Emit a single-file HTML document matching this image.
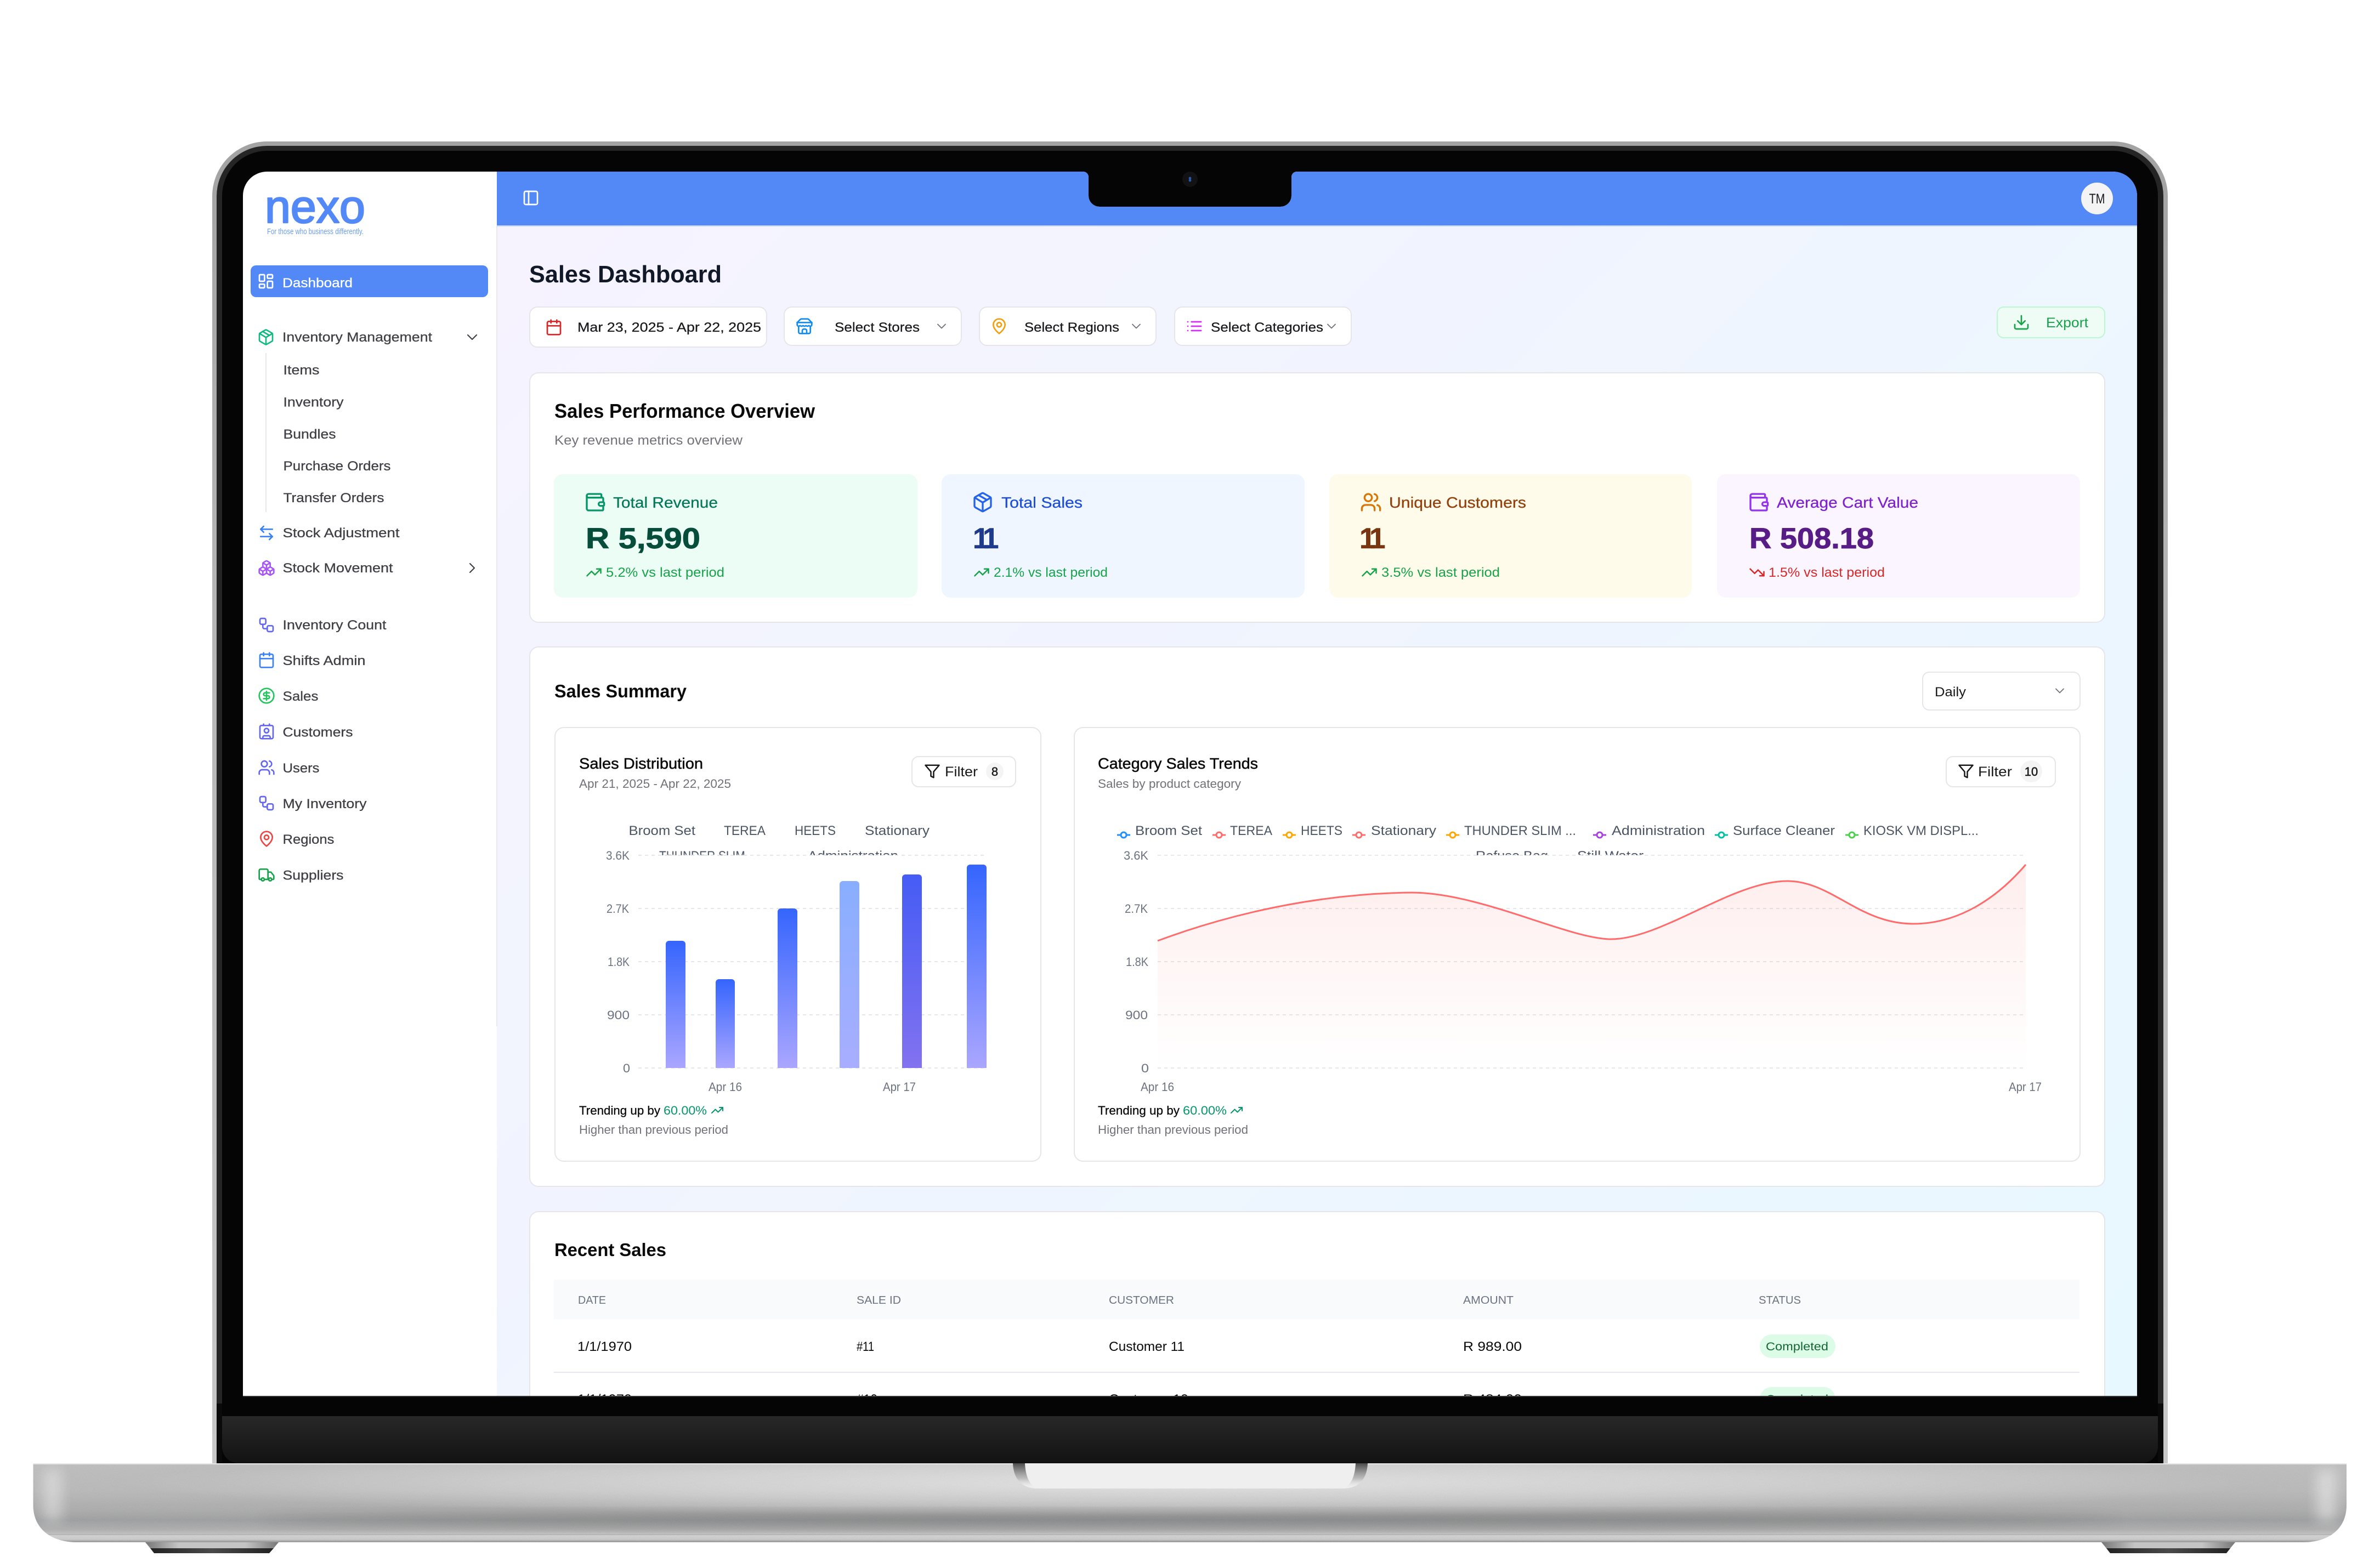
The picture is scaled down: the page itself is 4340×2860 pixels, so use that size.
<!DOCTYPE html>
<html lang="en">
<head>
<meta charset="utf-8">
<title>Sales Dashboard</title>
<style>
html,body{margin:0;padding:0;background:#fff;width:4340px;height:2860px;overflow:hidden}
svg{display:block}
text{font-family:"Liberation Sans",sans-serif}
.ic{fill:none;stroke-width:2;stroke-linecap:round;stroke-linejoin:round}
.thin{stroke-width:1.6}
</style>
</head>
<body>
<svg xmlns="http://www.w3.org/2000/svg" width="4340" height="2860" viewBox="0 0 4340 2860">
<defs>
<symbol id="dash" viewBox="0 0 24 24"><rect x="3" y="3" width="7" height="9" rx="1"/><rect x="14" y="3" width="7" height="5" rx="1"/><rect x="14" y="12" width="7" height="9" rx="1"/><rect x="3" y="16" width="7" height="5" rx="1"/></symbol>
<symbol id="pkg" viewBox="0 0 24 24"><path d="M11 21.73a2 2 0 0 0 2 0l7-4A2 2 0 0 0 21 16V8a2 2 0 0 0-1-1.73l-7-4a2 2 0 0 0-2 0l-7 4A2 2 0 0 0 3 8v8a2 2 0 0 0 1 1.73z"/><path d="M12 22V12"/><path d="m3.3 7 7.703 4.734a2 2 0 0 0 1.994 0L20.7 7"/><path d="m7.5 4.27 9 5.15"/></symbol>
<symbol id="arrows" viewBox="0 0 24 24"><path d="M8 3 4 7l4 4"/><path d="M4 7h16"/><path d="m16 21 4-4-4-4"/><path d="M20 17H4"/></symbol>
<symbol id="boxes" viewBox="0 0 24 24"><path d="M2.97 12.92A2 2 0 0 0 2 14.63v3.24a2 2 0 0 0 .97 1.71l3 1.8a2 2 0 0 0 2.06 0L12 19v-5.5l-5-3-4.03 2.42Z"/><path d="m7 16.5-4.74-2.85"/><path d="m7 16.5 5-3"/><path d="M7 16.5v5.17"/><path d="M12 13.5V19l3.97 2.38a2 2 0 0 0 2.06 0l3-1.8a2 2 0 0 0 .97-1.71v-3.24a2 2 0 0 0-.97-1.71L17 10.5l-5 3Z"/><path d="m17 16.5-5-3"/><path d="m17 16.5 4.74-2.85"/><path d="M17 16.5v5.17"/><path d="M7.97 4.42A2 2 0 0 0 7 6.13v4.37l5 3 5-3V6.13a2 2 0 0 0-.97-1.71l-3-1.8a2 2 0 0 0-2.06 0l-3 1.8Z"/><path d="M12 8 7.26 5.15"/><path d="m12 8 4.74-2.85"/><path d="M12 13.5V8"/></symbol>
<symbol id="flow" viewBox="0 0 24 24"><rect x="3" y="3" width="8" height="8" rx="2"/><path d="M7 11v4a2 2 0 0 0 2 2h4"/><rect x="13" y="13" width="8" height="8" rx="2"/></symbol>
<symbol id="cal" viewBox="0 0 24 24"><path d="M8 2v4"/><path d="M16 2v4"/><rect x="3" y="4" width="18" height="18" rx="2"/><path d="M3 10h18"/></symbol>
<symbol id="dollar" viewBox="0 0 24 24"><circle cx="12" cy="12" r="10"/><path d="M16 8h-6a2 2 0 1 0 0 4h4a2 2 0 1 1 0 4H8"/><path d="M12 18V6"/></symbol>
<symbol id="contact" viewBox="0 0 24 24"><path d="M16 2v2"/><path d="M7 22v-2a2 2 0 0 1 2-2h6a2 2 0 0 1 2 2v2"/><path d="M8 2v2"/><circle cx="12" cy="11" r="3"/><rect x="3" y="4" width="18" height="18" rx="2"/></symbol>
<symbol id="users" viewBox="0 0 24 24"><path d="M16 21v-2a4 4 0 0 0-4-4H6a4 4 0 0 0-4 4v2"/><circle cx="9" cy="7" r="4"/><path d="M22 21v-2a4 4 0 0 0-3-3.87"/><path d="M16 3.13a4 4 0 0 1 0 7.75"/></symbol>
<symbol id="pin" viewBox="0 0 24 24"><path d="M20 10c0 6-8 12-8 12s-8-6-8-12a8 8 0 0 1 16 0Z"/><circle cx="12" cy="10" r="3"/></symbol>
<symbol id="truck" viewBox="0 0 24 24"><path d="M14 18V6a2 2 0 0 0-2-2H4a2 2 0 0 0-2 2v11a1 1 0 0 0 1 1h2"/><path d="M15 18H9"/><path d="M19 18h2a1 1 0 0 0 1-1v-3.65a1 1 0 0 0-.22-.624l-3.48-4.35A1 1 0 0 0 17.52 8H14"/><circle cx="17" cy="18" r="2"/><circle cx="7" cy="18" r="2"/></symbol>
<symbol id="down" viewBox="0 0 24 24"><path d="m6 9 6 6 6-6"/></symbol>
<symbol id="right" viewBox="0 0 24 24"><path d="m9 18 6-6-6-6"/></symbol>
<symbol id="panel" viewBox="0 0 24 24"><rect x="3" y="3" width="18" height="18" rx="2"/><path d="M9 3v18"/></symbol>
<symbol id="store" viewBox="0 0 24 24"><path d="m2 7 4.41-4.41A2 2 0 0 1 7.83 2h8.34a2 2 0 0 1 1.42.59L22 7"/><path d="M4 12v8a2 2 0 0 0 2 2h12a2 2 0 0 0 2-2v-8"/><path d="M15 22v-4a2 2 0 0 0-2-2h-2a2 2 0 0 0-2 2v4"/><path d="M2 7h20"/><path d="M22 7v3a2 2 0 0 1-2 2a2.7 2.7 0 0 1-1.59-.63.7.7 0 0 0-.82 0A2.7 2.7 0 0 1 16 12a2.7 2.7 0 0 1-1.59-.63.7.7 0 0 0-.82 0A2.7 2.7 0 0 1 12 12a2.7 2.7 0 0 1-1.59-.63.7.7 0 0 0-.82 0A2.7 2.7 0 0 1 8 12a2.7 2.7 0 0 1-1.59-.63.7.7 0 0 0-.82 0A2.7 2.7 0 0 1 4 12a2 2 0 0 1-2-2V7"/></symbol>
<symbol id="list" viewBox="0 0 24 24"><path d="M3 12h.01"/><path d="M3 18h.01"/><path d="M3 6h.01"/><path d="M8 12h13"/><path d="M8 18h13"/><path d="M8 6h13"/></symbol>
<symbol id="wallet" viewBox="0 0 24 24"><path d="M19 7V4a1 1 0 0 0-1-1H5a2 2 0 0 0 0 4h15a1 1 0 0 1 1 1v4h-3a2 2 0 0 0 0 4h3a1 1 0 0 0 1-1v-2a1 1 0 0 0-1-1"/><path d="M3 5v14a2 2 0 0 0 2 2h15a1 1 0 0 0 1-1v-4"/></symbol>
<symbol id="tup" viewBox="0 0 24 24"><path d="M16 7h6v6"/><path d="m22 7-8.5 8.5-5-5L2 17"/></symbol>
<symbol id="tdown" viewBox="0 0 24 24"><path d="M16 17h6v-6"/><path d="m22 17-8.5-8.5-5 5L2 7"/></symbol>
<symbol id="funnel" viewBox="0 0 24 24"><path d="M22 3H2l8 9.46V19l4 2v-8.54L22 3z"/></symbol>
<symbol id="dl" viewBox="0 0 24 24"><path d="M21 15v4a2 2 0 0 1-2 2H5a2 2 0 0 1-2-2v-4"/><path d="M7 10l5 5 5-5"/><path d="M12 15V3"/></symbol>

<clipPath id="screen"><path d="M443,2546V357a44,44 0 0 1 44,-44H1975a10,10 0 0 1 10,10V357a20,20 0 0 0 20,20H2335a20,20 0 0 0 20,-20V323a10,10 0 0 1 10,-10H3853a44,44 0 0 1 44,44V2546Z"/></clipPath>
<clipPath id="legendClip"><rect x="1000" y="1500" width="2800" height="60"/></clipPath>
<clipPath id="baseClip"><path d="M60.5,2669H4279V2745C4279,2790 4245,2813 4200,2813H140C95,2813 60.5,2790 60.5,2745Z"/></clipPath>

<linearGradient id="contentBg" gradientUnits="userSpaceOnUse" x1="1120" y1="198" x2="3682" y2="2760"><stop offset="0" stop-color="#f6f3ff"/><stop offset=".5" stop-color="#eff5fe"/><stop offset="1" stop-color="#e8f8ff"/></linearGradient>
<linearGradient id="barA" x1="0" y1="0" x2="0" y2="1"><stop offset="0" stop-color="#3565fd"/><stop offset="1" stop-color="#aaa6ff"/></linearGradient>
<linearGradient id="barB" x1="0" y1="0" x2="0" y2="1"><stop offset="0" stop-color="#89aeff"/><stop offset="1" stop-color="#a8aeff"/></linearGradient>
<linearGradient id="barC" x1="0" y1="0" x2="0" y2="1"><stop offset="0" stop-color="#455cf5"/><stop offset="1" stop-color="#8272f0"/></linearGradient>
<linearGradient id="area" gradientUnits="userSpaceOnUse" x1="0" y1="1577" x2="0" y2="1950"><stop offset="0" stop-color="#ff6b6b" stop-opacity=".12"/><stop offset="1" stop-color="#ff6b6b" stop-opacity="0"/></linearGradient>
<linearGradient id="bezel" x1="0" y1="0" x2="0" y2="1"><stop offset="0" stop-color="#282828"/><stop offset="1" stop-color="#121212"/></linearGradient>
<linearGradient id="baseV" gradientUnits="userSpaceOnUse" x1="0" y1="2669" x2="0" y2="2813">
<stop offset="0" stop-color="#e4e4e4"/><stop offset=".02" stop-color="#bdbdbd"/><stop offset=".35" stop-color="#b9b9b9"/><stop offset=".6" stop-color="#aaaaaa"/><stop offset=".72" stop-color="#9c9d9e"/><stop offset=".84" stop-color="#adadae"/><stop offset=".895" stop-color="#c2c2c3"/><stop offset=".9" stop-color="#a9a9aa"/><stop offset=".915" stop-color="#d3d3d5"/><stop offset=".965" stop-color="#cbcbcc"/><stop offset=".985" stop-color="#a5a5a5"/><stop offset="1" stop-color="#8e8e8e"/></linearGradient>
<radialGradient id="baseGlow"><stop offset="0" stop-color="#fff" stop-opacity=".62"/><stop offset=".55" stop-color="#fff" stop-opacity=".34"/><stop offset="1" stop-color="#fff" stop-opacity="0"/></radialGradient>
<linearGradient id="notchShade" x1="0" y1="0" x2="0" y2="1"><stop offset="0" stop-color="#4a4a4a"/><stop offset=".6" stop-color="#9a9a9a" stop-opacity=".6"/><stop offset="1" stop-color="#efefef" stop-opacity="0"/></linearGradient>
<linearGradient id="footT" x1="0" y1="0" x2="1" y2="0"><stop offset="0" stop-color="#777"/><stop offset=".25" stop-color="#c4c4c4"/><stop offset=".75" stop-color="#c4c4c4"/><stop offset="1" stop-color="#777"/></linearGradient>
<linearGradient id="footB" x1="0" y1="0" x2="1" y2="0"><stop offset="0" stop-color="#222"/><stop offset=".5" stop-color="#4a4a4a"/><stop offset="1" stop-color="#222"/></linearGradient>
<linearGradient id="lidEdge" x1="0" y1="0" x2="0" y2="1"><stop offset="0" stop-color="#a3a3a3"/><stop offset=".3" stop-color="#b4b4b4"/><stop offset="1" stop-color="#c8c8c8"/></linearGradient>
<filter id="blur12" x="-50%" y="-50%" width="200%" height="200%"><feGaussianBlur stdDeviation="12"/></filter>
<filter id="grain" x="0" y="0" width="100%" height="100%"><feTurbulence type="fractalNoise" baseFrequency=".7" numOctaves="2" seed="4"/><feColorMatrix values=".33 .33 .33 0 0 .33 .33 .33 0 0 .33 .33 .33 0 0 0 0 0 0 1"/></filter>
</defs>

<rect width="4340" height="2860" fill="#fff"/>

<!-- feet -->
<path d="M265,2813H508L499,2824H274Z" fill="url(#footT)"/>
<path d="M274,2824H499L491,2833H281Z" fill="url(#footB)"/>
<path d="M3832,2813H4076L4067,2824H3841Z" fill="url(#footT)"/>
<path d="M3841,2824H4067L4060,2833H3848Z" fill="url(#footB)"/>

<!-- lid -->
<path d="M387,2669V358a100,100 0 0 1 100,-100H3853a100,100 0 0 1 100,100V2669Z" fill="url(#lidEdge)"/>
<path d="M395,2669V358a92,92 0 0 1 92,-92H3853a92,92 0 0 1 92,92V2669Z" fill="#252525"/>
<path d="M405,2669V357a82,82 0 0 1 82,-82H3853a82,82 0 0 1 82,82V2669Z" fill="#050505"/>
<path d="M395,2560V2669H3945V2560H3935V2669H405V2560Z" fill="#0a0a0a"/>
<path d="M405,2583H3935V2639a30,30 0 0 1 -30,30H435a30,30 0 0 1 -30,-30Z" fill="url(#bezel)"/>
<rect x="443" y="2546" width="3454" height="2" fill="#333"/>

<!-- screen -->
<g clip-path="url(#screen)">
<rect x="443" y="313" width="3454" height="2233" fill="#fff"/>
<rect x="906" y="412" width="2991" height="2134" fill="url(#contentBg)"/>
<rect x="905" y="412" width="2" height="1460" fill="#e8e8ee"/>
<rect x="906" y="313" width="2991" height="99" fill="#5389f7"/>
<rect x="906" y="411" width="2991" height="2" fill="#c4d3f3"/>
<use href="#panel" class="ic" x="952" y="345" width="32" height="32" stroke="#fff"/>
<circle cx="3824" cy="362" r="29" fill="#f4f4f5"/>
<text x="3809.5" y="371" font-size="25" fill="#18181b" textLength="29" lengthAdjust="spacingAndGlyphs">TM</text>

<!-- sidebar -->
<text x="483" y="406" font-size="84" fill="#5389f7" stroke="#5389f7" stroke-width="2.5" stroke-linejoin="round" textLength="183" lengthAdjust="spacingAndGlyphs">nexo</text>
<text x="487" y="427" font-size="15" fill="#6b9cf8" textLength="176" lengthAdjust="spacingAndGlyphs">For those who business differently.</text>

<rect x="457" y="484" width="433" height="58" rx="10" fill="#5389f7"/>
<use href="#dash" class="ic" x="469" y="497" width="32" height="32" stroke="#fff"/>
<text x="515" y="524" font-size="24" fill="#fff" stroke="#fff" stroke-width=".3" textLength="128" lengthAdjust="spacingAndGlyphs">Dashboard</text>

<g font-size="24" fill="#3f3f46" stroke="#3f3f46" stroke-width=".3">
<text x="515" y="623" textLength="273" lengthAdjust="spacingAndGlyphs">Inventory Management</text>
<text x="516.5" y="683" textLength="66" lengthAdjust="spacingAndGlyphs">Items</text>
<text x="516.5" y="741.5" textLength="110" lengthAdjust="spacingAndGlyphs">Inventory</text>
<text x="516.5" y="800" textLength="96" lengthAdjust="spacingAndGlyphs">Bundles</text>
<text x="516.5" y="858" textLength="196" lengthAdjust="spacingAndGlyphs">Purchase Orders</text>
<text x="516.5" y="916" textLength="184" lengthAdjust="spacingAndGlyphs">Transfer Orders</text>
<text x="515.5" y="980" textLength="213" lengthAdjust="spacingAndGlyphs">Stock Adjustment</text>
<text x="515.5" y="1044" textLength="201" lengthAdjust="spacingAndGlyphs">Stock Movement</text>
<text x="515.5" y="1148" textLength="189" lengthAdjust="spacingAndGlyphs">Inventory Count</text>
<text x="515.5" y="1213" textLength="151" lengthAdjust="spacingAndGlyphs">Shifts Admin</text>
<text x="515.5" y="1278" textLength="65" lengthAdjust="spacingAndGlyphs">Sales</text>
<text x="515.5" y="1343.5" textLength="128" lengthAdjust="spacingAndGlyphs">Customers</text>
<text x="515.5" y="1409" textLength="67" lengthAdjust="spacingAndGlyphs">Users</text>
<text x="515.5" y="1474" textLength="153" lengthAdjust="spacingAndGlyphs">My Inventory</text>
<text x="515.5" y="1539" textLength="94" lengthAdjust="spacingAndGlyphs">Regions</text>
<text x="515.5" y="1604.5" textLength="111" lengthAdjust="spacingAndGlyphs">Suppliers</text>
</g>
<rect x="484" y="644" width="2" height="290" fill="#e7e7ea"/>
<use href="#pkg" class="ic" x="469" y="599" width="32" height="32" stroke="#10b981"/>
<use href="#down" class="ic thin" x="845" y="599" width="32" height="32" stroke="#3f3f46"/>
<use href="#arrows" class="ic" x="470" y="956" width="32" height="32" stroke="#3b82f6"/>
<use href="#boxes" class="ic" x="470" y="1020" width="32" height="32" stroke="#a855f7"/>
<use href="#right" class="ic thin" x="845" y="1020" width="32" height="32" stroke="#3f3f46"/>
<use href="#flow" class="ic" x="470" y="1124" width="32" height="32" stroke="#6366f1"/>
<use href="#cal" class="ic" x="470" y="1188" width="32" height="32" stroke="#3b82f6"/>
<use href="#dollar" class="ic" x="470" y="1253" width="32" height="32" stroke="#22c55e"/>
<use href="#contact" class="ic" x="470" y="1318" width="32" height="32" stroke="#6366f1"/>
<use href="#users" class="ic" x="470" y="1384" width="32" height="32" stroke="#6366f1"/>
<use href="#flow" class="ic" x="470" y="1449" width="32" height="32" stroke="#6366f1"/>
<use href="#pin" class="ic" x="470" y="1514" width="32" height="32" stroke="#ef4444"/>
<use href="#truck" class="ic" x="470" y="1580" width="32" height="32" stroke="#16a34a"/>

<!-- title and filters -->
<text x="965" y="515" font-size="44" font-weight="700" fill="#111827" textLength="351" lengthAdjust="spacingAndGlyphs">Sales Dashboard</text>
<g fill="#fff" stroke="#e6e6ea" stroke-width="2">
<rect x="966" y="560" width="432" height="73" rx="14"/>
<rect x="1430" y="560" width="323" height="70" rx="14"/>
<rect x="1786" y="560" width="322" height="70" rx="14"/>
<rect x="2142" y="560" width="322" height="70" rx="14"/>
</g>
<g font-size="24" fill="#18181b" stroke="#18181b" stroke-width=".25">
<text x="1053" y="605" textLength="335" lengthAdjust="spacingAndGlyphs">Mar 23, 2025 - Apr 22, 2025</text>
<text x="1522" y="605" textLength="155" lengthAdjust="spacingAndGlyphs">Select Stores</text>
<text x="1868" y="605" textLength="173" lengthAdjust="spacingAndGlyphs">Select Regions</text>
<text x="2208" y="605" textLength="205" lengthAdjust="spacingAndGlyphs">Select Categories</text>
</g>
<use href="#cal" class="ic" x="994" y="581" width="32" height="32" stroke="#dc2626"/>
<use href="#store" class="ic" x="1451" y="579" width="32" height="32" stroke="#0f8cf2"/>
<use href="#pin" class="ic" x="1806" y="579" width="32" height="32" stroke="#f59e0b"/>
<use href="#list" class="ic" x="2162" y="579" width="32" height="32" stroke="#d62ef0"/>
<use href="#down" class="ic thin" x="1703" y="581" width="28" height="28" stroke="#71717a"/>
<use href="#down" class="ic thin" x="2058" y="581" width="28" height="28" stroke="#71717a"/>
<use href="#down" class="ic thin" x="2414" y="581" width="28" height="28" stroke="#71717a"/>
<rect x="3642" y="560" width="196" height="56" rx="12" fill="#effcf5" stroke="#bbf7d0" stroke-width="2"/>
<use href="#dl" class="ic" x="3670" y="572" width="32" height="32" stroke="#16a34a"/>
<text x="3731" y="597" font-size="25" fill="#16a34a" textLength="77" lengthAdjust="spacingAndGlyphs">Export</text>

<!-- overview -->
<rect x="966" y="680" width="2872" height="455" rx="16" fill="#fff" stroke="#e6e6ea" stroke-width="2"/>
<text x="1011" y="762" font-size="36" font-weight="700" fill="#0a0a0a" textLength="475" lengthAdjust="spacingAndGlyphs">Sales Performance Overview</text>
<text x="1011" y="811" font-size="24" fill="#71717a" textLength="343" lengthAdjust="spacingAndGlyphs">Key revenue metrics overview</text>

<rect x="1010" y="865" width="663" height="225" rx="16" fill="#ecfdf5"/>
<rect x="1717" y="865" width="662" height="225" rx="16" fill="#eff6ff"/>
<rect x="2424" y="865" width="661" height="225" rx="16" fill="#fefbea"/>
<rect x="3131" y="865" width="662" height="225" rx="16" fill="#faf5ff"/>

<use href="#wallet" class="ic" x="1065" y="896" width="40" height="40" stroke="#059669"/>
<text x="1118" y="926" font-size="28" fill="#047857" stroke="#047857" stroke-width=".3" textLength="191" lengthAdjust="spacingAndGlyphs">Total Revenue</text>
<text x="1068" y="1000" font-size="53" font-weight="700" fill="#064e3b" stroke="#064e3b" stroke-width=".9" textLength="209" lengthAdjust="spacingAndGlyphs">R 5,590</text>
<use href="#tup" class="ic" x="1068" y="1029" width="30" height="30" stroke="#16a34a"/>
<text x="1105" y="1052" font-size="24" fill="#16a34a" textLength="216" lengthAdjust="spacingAndGlyphs">5.2% vs last period</text>

<use href="#pkg" class="ic" x="1772" y="896" width="40" height="40" stroke="#2563eb"/>
<text x="1826" y="926" font-size="28" fill="#1d4ed8" stroke="#1d4ed8" stroke-width=".3" textLength="148" lengthAdjust="spacingAndGlyphs">Total Sales</text>
<text x="1774" y="1000" font-size="53" font-weight="700" fill="#1e3a8a" stroke="#1e3a8a" stroke-width=".6" letter-spacing="-8.5">11</text>
<use href="#tup" class="ic" x="1775" y="1029" width="30" height="30" stroke="#16a34a"/>
<text x="1812" y="1052" font-size="24" fill="#16a34a" textLength="208" lengthAdjust="spacingAndGlyphs">2.1% vs last period</text>

<use href="#users" class="ic" x="2480" y="896" width="40" height="40" stroke="#d97706"/>
<text x="2533" y="926" font-size="28" fill="#92400e" stroke="#92400e" stroke-width=".3" textLength="250" lengthAdjust="spacingAndGlyphs">Unique Customers</text>
<text x="2479" y="1000" font-size="53" font-weight="700" fill="#78350f" stroke="#78350f" stroke-width=".6" letter-spacing="-8.5">11</text>
<use href="#tup" class="ic" x="2482" y="1029" width="30" height="30" stroke="#16a34a"/>
<text x="2519" y="1052" font-size="24" fill="#16a34a" textLength="216" lengthAdjust="spacingAndGlyphs">3.5% vs last period</text>

<use href="#wallet" class="ic" x="3187" y="896" width="40" height="40" stroke="#9333ea"/>
<text x="3240" y="926" font-size="28" fill="#7e22ce" stroke="#7e22ce" stroke-width=".3" textLength="258" lengthAdjust="spacingAndGlyphs">Average Cart Value</text>
<text x="3190" y="1000" font-size="53" font-weight="700" fill="#581c87" stroke="#581c87" stroke-width=".9" textLength="227" lengthAdjust="spacingAndGlyphs">R 508.18</text>
<use href="#tdown" class="ic" x="3189" y="1029" width="30" height="30" stroke="#dc2626"/>
<text x="3225" y="1052" font-size="24" fill="#dc2626" textLength="212" lengthAdjust="spacingAndGlyphs">1.5% vs last period</text>

<!-- summary -->
<rect x="966" y="1180" width="2872" height="984" rx="16" fill="#fff" stroke="#e6e6ea" stroke-width="2"/>
<text x="1011" y="1272" font-size="33" font-weight="700" fill="#0a0a0a" textLength="241" lengthAdjust="spacingAndGlyphs">Sales Summary</text>
<rect x="3506" y="1226" width="287" height="69" rx="12" fill="#fff" stroke="#e6e6ea" stroke-width="2"/>
<text x="3528" y="1270" font-size="24" fill="#18181b" textLength="57" lengthAdjust="spacingAndGlyphs">Daily</text>
<use href="#down" class="ic thin" x="3742" y="1246" width="28" height="28" stroke="#71717a"/>

<!-- chart cards -->
<rect x="1012" y="1327" width="886" height="791" rx="16" fill="#fff" stroke="#e6e6ea" stroke-width="2"/>
<rect x="1959" y="1327" width="1834" height="791" rx="16" fill="#fff" stroke="#e6e6ea" stroke-width="2"/>

<!-- left chart -->
<text x="1056" y="1402" font-size="28" fill="#0a0a0a" stroke="#0a0a0a" stroke-width=".5" textLength="226" lengthAdjust="spacingAndGlyphs">Sales Distribution</text>
<text x="1056" y="1437" font-size="22" fill="#71717a" textLength="277" lengthAdjust="spacingAndGlyphs">Apr 21, 2025 - Apr 22, 2025</text>
<rect x="1663" y="1380" width="189" height="55" rx="12" fill="#fff" stroke="#e6e6ea" stroke-width="2"/>
<use href="#funnel" class="ic" x="1685" y="1392" width="30" height="30" stroke="#18181b"/>
<text x="1723" y="1416" font-size="25" fill="#18181b" textLength="60" lengthAdjust="spacingAndGlyphs">Filter</text>
<circle cx="1814" cy="1407" r="16" fill="#f4f4f5"/>
<text x="1814" y="1415" font-size="22" fill="#18181b" stroke="#18181b" stroke-width=".5" text-anchor="middle">8</text>

<g font-size="24" fill="#4b5563">
<text x="1146.5" y="1523" textLength="121.5" lengthAdjust="spacingAndGlyphs">Broom Set</text>
<text x="1320" y="1523" textLength="76" lengthAdjust="spacingAndGlyphs">TEREA</text>
<text x="1449" y="1523" textLength="75" lengthAdjust="spacingAndGlyphs">HEETS</text>
<text x="1577" y="1523" textLength="118" lengthAdjust="spacingAndGlyphs">Stationary</text>
<g clip-path="url(#legendClip)">
<text x="1202" y="1569" textLength="180" lengthAdjust="spacingAndGlyphs">THUNDER SLIM ...</text>
<text x="1473" y="1569" textLength="165" lengthAdjust="spacingAndGlyphs">Administration</text>
<text x="2691" y="1569" textLength="132" lengthAdjust="spacingAndGlyphs">Refuse Bag</text>
<text x="2876" y="1569" textLength="121" lengthAdjust="spacingAndGlyphs">Still Water</text>
</g>
</g>
<g stroke="#e5e7eb" stroke-width="2" stroke-dasharray="6 6" fill="none">
<path d="M1164,1560H1799M1164,1657H1799M1164,1754H1799M1164,1851H1799M1164,1948H1799"/>
<path d="M2111,1560H3694M2111,1657H3694M2111,1754H3694M2111,1851H3694M2111,1948H3694"/>
</g>
<g font-size="22" fill="#6b7280">
<text x="1105" y="1568" textLength="43" lengthAdjust="spacingAndGlyphs">3.6K</text>
<text x="1106" y="1665" textLength="41" lengthAdjust="spacingAndGlyphs">2.7K</text>
<text x="1108" y="1762" textLength="40" lengthAdjust="spacingAndGlyphs">1.8K</text>
<text x="1107" y="1859" textLength="41" lengthAdjust="spacingAndGlyphs">900</text>
<text x="1136" y="1956" textLength="13" lengthAdjust="spacingAndGlyphs">0</text>
<text x="1292" y="1990" textLength="61" lengthAdjust="spacingAndGlyphs">Apr 16</text>
<text x="1610" y="1990" textLength="60" lengthAdjust="spacingAndGlyphs">Apr 17</text>
<text x="2049" y="1568" textLength="45" lengthAdjust="spacingAndGlyphs">3.6K</text>
<text x="2051" y="1665" textLength="42" lengthAdjust="spacingAndGlyphs">2.7K</text>
<text x="2053" y="1762" textLength="41" lengthAdjust="spacingAndGlyphs">1.8K</text>
<text x="2052" y="1859" textLength="41" lengthAdjust="spacingAndGlyphs">900</text>
<text x="2081" y="1956" textLength="14" lengthAdjust="spacingAndGlyphs">0</text>
<text x="2080" y="1990" textLength="61" lengthAdjust="spacingAndGlyphs">Apr 16</text>
<text x="3663" y="1990" textLength="60" lengthAdjust="spacingAndGlyphs">Apr 17</text>
</g>
<path d="M1214,1948V1722a6,6 0 0 1 6,-6H1244a6,6 0 0 1 6,6V1948Z" fill="url(#barA)"/>
<path d="M1305,1948V1792a6,6 0 0 1 6,-6H1334a6,6 0 0 1 6,6V1948Z" fill="url(#barA)"/>
<path d="M1418,1948V1663a6,6 0 0 1 6,-6H1448a6,6 0 0 1 6,6V1948Z" fill="url(#barA)"/>
<path d="M1531,1948V1613a6,6 0 0 1 6,-6H1561a6,6 0 0 1 6,6V1948Z" fill="url(#barB)"/>
<path d="M1645,1948V1601a6,6 0 0 1 6,-6H1675a6,6 0 0 1 6,6V1948Z" fill="url(#barC)"/>
<path d="M1763,1948V1583a6,6 0 0 1 6,-6H1793a6,6 0 0 1 6,6V1948Z" fill="url(#barA)"/>
<text x="1056" y="2033" font-size="22" fill="#0a0a0a" stroke="#0a0a0a" stroke-width=".3" textLength="148" lengthAdjust="spacingAndGlyphs">Trending up by</text>
<text x="1210" y="2033" font-size="22" fill="#059669" textLength="79" lengthAdjust="spacingAndGlyphs">60.00%</text>
<use href="#tup" class="ic" x="1296" y="2013" width="24" height="24" stroke="#059669"/>
<text x="1056" y="2068" font-size="22" fill="#71717a" textLength="272" lengthAdjust="spacingAndGlyphs">Higher than previous period</text>

<!-- right chart -->
<text x="2002" y="1402" font-size="28" fill="#0a0a0a" stroke="#0a0a0a" stroke-width=".5" textLength="292" lengthAdjust="spacingAndGlyphs">Category Sales Trends</text>
<text x="2002" y="1437" font-size="22" fill="#71717a" textLength="261" lengthAdjust="spacingAndGlyphs">Sales by product category</text>
<rect x="3549" y="1380" width="199" height="55" rx="12" fill="#fff" stroke="#e6e6ea" stroke-width="2"/>
<use href="#funnel" class="ic" x="3570" y="1392" width="30" height="30" stroke="#18181b"/>
<text x="3607" y="1416" font-size="25" fill="#18181b" textLength="62" lengthAdjust="spacingAndGlyphs">Filter</text>
<circle cx="3704" cy="1407" r="20" fill="#f4f4f5"/>
<text x="3704" y="1415" font-size="22" fill="#18181b" stroke="#18181b" stroke-width=".5" text-anchor="middle">10</text>

<g font-size="24" fill="#4b5563">
<text x="2070" y="1523" textLength="122" lengthAdjust="spacingAndGlyphs">Broom Set</text>
<text x="2243" y="1523" textLength="77" lengthAdjust="spacingAndGlyphs">TEREA</text>
<text x="2372" y="1523" textLength="76" lengthAdjust="spacingAndGlyphs">HEETS</text>
<text x="2500" y="1523" textLength="119" lengthAdjust="spacingAndGlyphs">Stationary</text>
<text x="2670" y="1523" textLength="204" lengthAdjust="spacingAndGlyphs">THUNDER SLIM ...</text>
<text x="2939" y="1523" textLength="170" lengthAdjust="spacingAndGlyphs">Administration</text>
<text x="3160" y="1523" textLength="186" lengthAdjust="spacingAndGlyphs">Surface Cleaner</text>
<text x="3398" y="1523" textLength="210" lengthAdjust="spacingAndGlyphs">KIOSK VM DISPL...</text>
</g>
<g stroke-width="3" fill="#fff">
<g stroke="#1e90ff"><path d="M2037,1523H2061"/><circle cx="2049" cy="1523" r="5"/></g>
<g stroke="#ff6b6b"><path d="M2211,1523H2235"/><circle cx="2223" cy="1523" r="5"/></g>
<g stroke="#ffa500"><path d="M2339,1523H2363"/><circle cx="2351" cy="1523" r="5"/></g>
<g stroke="#ff6b6b"><path d="M2466,1523H2490"/><circle cx="2478" cy="1523" r="5"/></g>
<g stroke="#ffa500"><path d="M2637,1523H2661"/><circle cx="2649" cy="1523" r="5"/></g>
<g stroke="#a742e0"><path d="M2905,1523H2929"/><circle cx="2917" cy="1523" r="5"/></g>
<g stroke="#00c1a2"><path d="M3127,1523H3151"/><circle cx="3139" cy="1523" r="5"/></g>
<g stroke="#4ad14a"><path d="M3365,1523H3389"/><circle cx="3377" cy="1523" r="5"/></g>
</g>
<path d="M2111,1716C2240,1668 2400,1630 2574,1628C2700,1628 2860,1713 2938,1713C3030,1713 3160,1607 3259,1607C3340,1607 3390,1685 3489,1685C3570,1685 3640,1640 3694,1577V1948H2111Z" fill="url(#area)"/>
<path d="M2111,1716C2240,1668 2400,1630 2574,1628C2700,1628 2860,1713 2938,1713C3030,1713 3160,1607 3259,1607C3340,1607 3390,1685 3489,1685C3570,1685 3640,1640 3694,1577" fill="none" stroke="#ff6b6b" stroke-width="3"/>
<text x="2002" y="2033" font-size="22" fill="#0a0a0a" stroke="#0a0a0a" stroke-width=".3" textLength="149" lengthAdjust="spacingAndGlyphs">Trending up by</text>
<text x="2157" y="2033" font-size="22" fill="#059669" textLength="80" lengthAdjust="spacingAndGlyphs">60.00%</text>
<use href="#tup" class="ic" x="2243" y="2013" width="24" height="24" stroke="#059669"/>
<text x="2002" y="2068" font-size="22" fill="#71717a" textLength="274" lengthAdjust="spacingAndGlyphs">Higher than previous period</text>

<!-- recent sales -->
<rect x="966" y="2210" width="2872" height="500" rx="16" fill="#fff" stroke="#e6e6ea" stroke-width="2"/>
<text x="1011" y="2291" font-size="33" font-weight="700" fill="#0a0a0a" textLength="204" lengthAdjust="spacingAndGlyphs">Recent Sales</text>
<rect x="1010" y="2334" width="2782" height="72" fill="#f9fafb"/>
<g font-size="20" fill="#6b7280">
<text x="1054" y="2378" textLength="51" lengthAdjust="spacingAndGlyphs">DATE</text>
<text x="1562" y="2378" textLength="81" lengthAdjust="spacingAndGlyphs">SALE ID</text>
<text x="2022" y="2378" textLength="119" lengthAdjust="spacingAndGlyphs">CUSTOMER</text>
<text x="2668" y="2378" textLength="92" lengthAdjust="spacingAndGlyphs">AMOUNT</text>
<text x="3207" y="2378" textLength="77" lengthAdjust="spacingAndGlyphs">STATUS</text>
</g>
<g font-size="24" fill="#0a0a0a">
<text x="1053" y="2464" textLength="99" lengthAdjust="spacingAndGlyphs">1/1/1970</text>
<text x="1562" y="2464" textLength="32" lengthAdjust="spacingAndGlyphs">#11</text>
<text x="2022" y="2464" textLength="138" lengthAdjust="spacingAndGlyphs">Customer 11</text>
<text x="2668" y="2464" textLength="107" lengthAdjust="spacingAndGlyphs">R 989.00</text>
<text x="1053" y="2560" textLength="99" lengthAdjust="spacingAndGlyphs">1/1/1970</text>
<text x="1562" y="2560" textLength="38" lengthAdjust="spacingAndGlyphs">#10</text>
<text x="2022" y="2560" textLength="145" lengthAdjust="spacingAndGlyphs">Customer 10</text>
<text x="2668" y="2560" textLength="107" lengthAdjust="spacingAndGlyphs">R 484.00</text>
</g>
<rect x="3209" y="2434" width="138" height="43" rx="21.5" fill="#dcfce7"/>
<text x="3220" y="2463" font-size="21" fill="#166534" textLength="114" lengthAdjust="spacingAndGlyphs">Completed</text>
<rect x="1010" y="2502" width="2782" height="2" fill="#e6e6ee"/>
<rect x="3209" y="2530" width="138" height="43" rx="21.5" fill="#dcfce7"/>
<text x="3220" y="2559" font-size="21" fill="#166534" textLength="114" lengthAdjust="spacingAndGlyphs">Completed</text>
</g>

<!-- camera -->
<circle cx="2170" cy="327" r="14" fill="#121214"/>
<circle cx="2170" cy="325" r="2.4" fill="#2a5aa8"/>
<circle cx="2170" cy="329" r="2.4" fill="#2a5aa8"/>

<!-- base -->
<g clip-path="url(#baseClip)">
<rect x="60" y="2669" width="4220" height="144" fill="url(#baseV)"/>
<ellipse cx="2170" cy="2705" rx="1950" ry="62" fill="url(#baseGlow)"/>
<ellipse cx="2170" cy="2772" rx="1700" ry="12" fill="#000" opacity=".2" filter="url(#blur12)"/>
<rect x="80" y="2680" width="32" height="95" fill="#fff" opacity=".45" filter="url(#blur12)"/>
<rect x="4225" y="2680" width="34" height="95" fill="#fff" opacity=".5" filter="url(#blur12)"/>
<rect x="60" y="2669" width="4220" height="144" filter="url(#grain)" opacity=".12"/>
<rect x="60" y="2669" width="4220" height="2" fill="#e6e6e6"/>
</g>
<path d="M1847,2669C1848,2692 1858,2715 1893,2715H2448C2483,2715 2493,2692 2494,2669Z" fill="#efefef"/>
<path d="M1847,2669C1848,2692 1858,2715 1893,2715C1876,2710 1870,2690 1869,2669Z" fill="url(#notchShade)"/>
<path d="M2494,2669C2493,2692 2483,2715 2448,2715C2465,2710 2471,2690 2472,2669Z" fill="url(#notchShade)"/>
</svg>
</body>
</html>
